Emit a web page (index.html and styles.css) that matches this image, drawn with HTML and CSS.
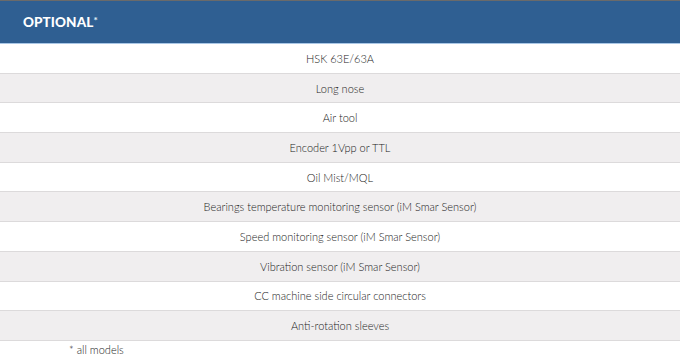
FILE: index.html
```html
<!DOCTYPE html>
<html>
<head>
<meta charset="utf-8">
<link rel="stylesheet" href="styles.css">
</head>
<body>
<div class="topline"></div>
<div class="header"><span class="title">OPTIONAL<span class="star">*</span></span></div>
<div class="rows">
  <div class="row">HSK 63E/63A</div>
  <div class="row alt">Long nose</div>
  <div class="row">Air tool</div>
  <div class="row alt">Encoder 1Vpp or TTL</div>
  <div class="row">Oil Mist/MQL</div>
  <div class="row alt">Bearings temperature monitoring sensor (iM Smar Sensor)</div>
  <div class="row">Speed monitoring sensor (iM Smar Sensor)</div>
  <div class="row alt">Vibration sensor (iM Smar Sensor)</div>
  <div class="row">CC machine side circular connectors</div>
  <div class="row alt">Anti-rotation sleeves</div>
</div>
<div class="note">* all models</div>
</body>
</html>
```
FILE: styles.css
```css
html, body { margin: 0; padding: 0; background: #fff; }
body { font-family: Lato, "Open Sans", sans-serif; color: #333; width: 680px; }
.topline { height: 1px; background: #6a6a6a; }
.header {
  background: #2f5f92;
  border-bottom: 1px solid #a9c7e6;
  display: flex;
  align-items: center;
  padding-left: 23px;
  box-sizing: border-box;
  height: 43px;
}
.title { color: #fff; font-weight: 900; font-size: 13.5px; letter-spacing: 0.1px; }
.star { font-size: 10px; vertical-align: 3px; color: #dfe8f2; }
.rows { display: flex; flex-direction: column; }
.row {
  height: 29.7px;
  box-sizing: border-box;
  border-bottom: 1px solid #dcdadb;
  display: flex;
  align-items: center;
  justify-content: center;
  font-size: 11px;
  font-weight: 300;
  color: #222;
  background: #fff;
}
.row.alt { background: #f0eeef; }
.note { font-size: 11px; font-weight: 300; padding-left: 69px; padding-top: 2px; color: #222; }
```
